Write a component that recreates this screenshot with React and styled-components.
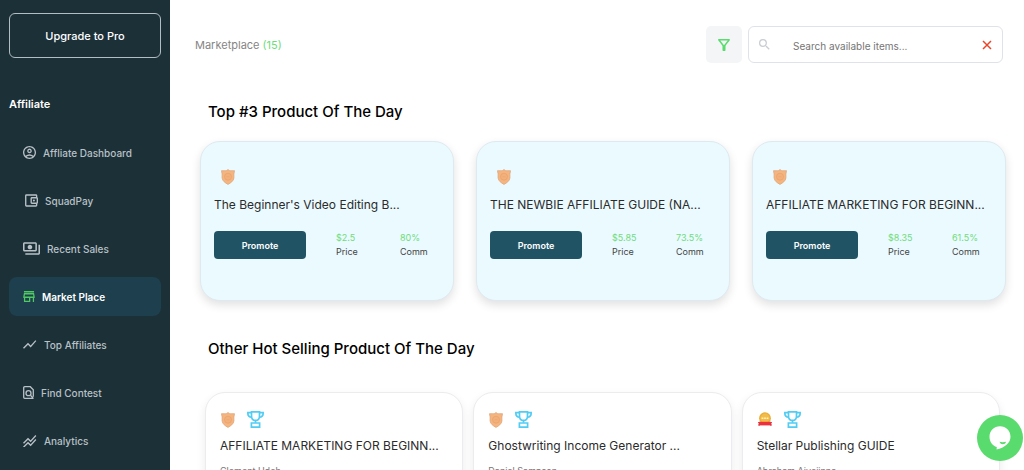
import React, { useState } from "react";
import styled, { createGlobalStyle } from "styled-components";

const topProducts = [
  { id: 1, title: "The Beginner's Video Editing B...", price: "$2.5", comm: "80%" },
  { id: 2, title: "THE NEWBIE AFFILIATE GUIDE (NA...", price: "$5.85", comm: "73.5%" },
  { id: 3, title: "AFFILIATE MARKETING FOR BEGINN...", price: "$8.35", comm: "61.5%" }
];

const otherProducts = [
  { id: 4, title: "AFFILIATE MARKETING FOR BEGINN...", author: "Clement Udeh", badge: "shield" },
  { id: 5, title: "Ghostwriting Income Generator ...", author: "Daniel Sampson", badge: "shield" },
  { id: 6, title: "Stellar Publishing GUIDE", author: "Abraham Aiyejinna", badge: "medal" }
];

const AccountIcon = () => (
  <svg width="13" height="13" viewBox="2 2 20 20" fill="currentColor" aria-hidden="true">
    <path d="M12 2C6.48 2 2 6.48 2 12s4.48 10 10 10 10-4.48 10-10S17.52 2 12 2zM7.35 18.5C8.66 17.56 10.26 17 12 17s3.34.56 4.65 1.5c-1.31.94-2.91 1.5-4.65 1.5s-3.34-.56-4.65-1.5zm10.79-1.38a9.947 9.947 0 0 0-12.28 0A7.957 7.957 0 0 1 4 12c0-4.42 3.58-8 8-8s8 3.58 8 8c0 1.95-.7 3.73-1.86 5.12z" />
    <path d="M12 6c-1.93 0-3.5 1.57-3.5 3.5S10.07 13 12 13s3.5-1.57 3.5-3.5S13.93 6 12 6zm0 5c-.83 0-1.5-.67-1.5-1.5S11.17 8 12 8s1.5.67 1.5 1.5S12.83 11 12 11z" />
  </svg>
);

const WalletIcon = () => (
  <svg width="15" height="13" viewBox="0 2.5 22 19" fill="currentColor" aria-hidden="true">
    <path d="M21 7.28V5c0-1.1-.9-2-2-2H5a2 2 0 0 0-2 2v14a2 2 0 0 0 2 2h14c1.1 0 2-.9 2-2v-2.28A2 2 0 0 0 22 15V9a2 2 0 0 0-1-1.72zM20 9v6h-7V9h7zM5 19V5h14v2h-6c-1.1 0-2 .9-2 2v6c0 1.1.9 2 2 2h6v2H5z" />
    <circle cx="16" cy="12" r="1.5" />
  </svg>
);

const SalesIcon = () => (
  <svg width="17" height="13" viewBox="1 4 22 16" fill="currentColor" aria-hidden="true">
    <path d="M19 14V6c0-1.1-.9-2-2-2H3c-1.1 0-2 .9-2 2v8c0 1.1.9 2 2 2h14c1.1 0 2-.9 2-2zm-2 0H3V6h14v8zm-7-7c-1.66 0-3 1.34-3 3s1.34 3 3 3 3-1.34 3-3-1.34-3-3-3zm13 0v11c0 1.1-.9 2-2 2H4v-2h17V7h2z" />
  </svg>
);

const StoreIcon = () => (
  <svg width="12" height="11" viewBox="2.5 4 19 16" preserveAspectRatio="none" fill="currentColor" aria-hidden="true">
    <path d="M18.36 9l.6 3H5.04l.6-3h12.72M20 4H4v2h16V4zm0 3H4l-1 5v2h1v6h10v-6h4v6h2v-6h1v-2l-1-5zM6 18v-4h6v4H6z" />
  </svg>
);

const TrendIcon = () => (
  <svg width="14" height="9" viewBox="2 5.5 21 13" fill="currentColor" aria-hidden="true">
    <path d="m3.5 18.49 6-6.01 4 4L22 6.92l-1.41-1.41-7.09 7.97-4-4L2 16.99z" />
  </svg>
);

const FindIcon = () => (
  <svg width="11" height="13" viewBox="0 0 11 13" fill="none" stroke="currentColor" strokeWidth="1.3" aria-hidden="true">
    <path d="M10.3 10.8V3.7L7.3.7H1.7a1 1 0 0 0-1 1v9.6a1 1 0 0 0 1 1h7.6c.3 0 .5-.1.7-.2L7.5 9.3" />
    <circle cx="5.5" cy="7.2" r="2.5" />
  </svg>
);

const AnalyticsIcon = () => (
  <svg width="14" height="12" viewBox="2 2.5 21 18" fill="currentColor" aria-hidden="true">
    <path d="m2 19.99 7.5-7.51 4 4 7.09-7.97L22 9.92l-8.5 9.56-4-4-6 6.01L2 19.99zm1.5-4.5 6-6.01 4 4L22 3.92l-1.41-1.41-7.09 7.97-4-4L2 13.99l1.5 1.5z" />
  </svg>
);

const FilterIcon = () => (
  <svg width="12" height="12" viewBox="4 4 16 16" fill="currentColor" aria-hidden="true">
    <path d="M7 6h10l-5.01 6.3L7 6zm-2.75-.39C6.27 8.2 10 13 10 13v6c0 .55.45 1 1 1h2c.55 0 1-.45 1-1v-6s3.72-4.8 5.74-7.39A.998.998 0 0 0 18.95 4H5.04c-.83 0-1.3.95-.79 1.61z" />
  </svg>
);

const SearchIcon = () => (
  <svg width="11" height="11" viewBox="3 3 18 18" fill="currentColor" aria-hidden="true">
    <path d="M15.5 14h-.79l-.28-.27A6.471 6.471 0 0 0 16 9.5 6.5 6.5 0 1 0 9.5 16c1.61 0 3.09-.59 4.23-1.57l.27.28v.79l5 4.99L20.49 19l-4.99-5zm-6 0C7.01 14 5 11.99 5 9.5S7.01 5 9.5 5 14 7.01 14 9.5 11.99 14 9.5 14z" />
  </svg>
);

const CloseIcon = () => (
  <svg width="10" height="10" viewBox="0 0 10 10" fill="none" stroke="currentColor" strokeWidth="1.5" aria-hidden="true">
    <path d="M1 1l8 8M9 1L1 9" />
  </svg>
);

const ShieldBadge = () => (
  <svg width="14" height="16" viewBox="0 0 14 16" aria-hidden="true">
    <path d="M7 .6 8.8 1.8 13.5 1.7 13.1 4C12.6 5 13.1 7 12.9 9c-.3 3-3.2 4.9-5.9 6.4C4.3 13.9 1.4 12 1.1 9 .9 7 1.4 5 .9 4L.5 1.7l4.7.1z" fill="#f5b580" stroke="#e0a678" strokeWidth=".8" />
    <circle cx="7" cy="7.7" r="3.5" fill="#f4b07a" stroke="#e6a06c" strokeWidth=".7" />
    <path d="M5.6 7.7h2.8" stroke="#eaa674" strokeWidth=".8" />
  </svg>
);

const MedalBadge = () => (
  <svg width="14" height="15" viewBox="0 0 14 15" aria-hidden="true">
    <circle cx="7" cy="6.2" r="5.9" fill="#e9ad38" />
    <circle cx="7" cy="6.2" r="4.6" fill="#f2bc48" />
    <path d="M3.6 6.3h6.8" stroke="#fff0c5" strokeWidth="1.6" strokeDasharray="1.8 .7" />
    <path d="M0 10h2v3.5H0l.8-1.7zM14 10h-2v3.5h2l-.8-1.7z" fill="#c9212c" />
    <path d="M1 9.8h12v3.6H1z" fill="#ee303d" />
  </svg>
);

const TrophyIcon = () => (
  <svg width="17" height="17" viewBox="0 0 17 17" fill="none" stroke="#51ccf3" strokeWidth="1.7" aria-hidden="true">
    <path d="M4.5.9h8v4.3c0 2.6-1.6 4.2-4 4.2s-4-1.6-4-4.2z" />
    <path d="M4.5 1.6H.9v1.1c0 2 1.4 3.3 3.8 3.5M12.5 1.6h3.6v1.1c0 2-1.4 3.3-3.8 3.5M8.5 9.4v2.3" />
    <path d="M4.4 12h8.2v4.1H4.4z" />
  </svg>
);

const ChatIcon = () => (
  <svg width="22" height="24" viewBox="0 0 22 24" aria-hidden="true">
    <path d="M11 .3C17 .3 21.5 4.9 21.5 10.7c0 6.4-5.8 10.8-14 12.9l.3-2.6C3.3 19.7.5 15.7.5 10.7.5 4.9 5 .3 11 .3z" fill="#fff" />
    <path d="M10.5 15.8c1.9.6 4.5.6 6.7 0-.7 1.7-1.9 2.5-3.4 2.5s-2.7-.8-3.3-2.5z" fill="#59db6d" />
  </svg>
);

const menu = [
  { name: "Affliate Dashboard", icon: <AccountIcon /> },
  { name: "SquadPay", icon: <WalletIcon /> },
  { name: "Recent Sales", icon: <SalesIcon /> },
  { name: "Market Place", icon: <StoreIcon /> },
  { name: "Top Affiliates", icon: <TrendIcon /> },
  { name: "Find Contest", icon: <FindIcon /> },
  { name: "Analytics", icon: <AnalyticsIcon /> }
];

const App = () => {
  const [active, setActive] = useState("Market Place");
  const [search, setSearch] = useState("");

  return (
    <Layout>
      <GlobalStyle />
      <Sidebar>
        <UpgradeButton type="button">Upgrade to Pro</UpgradeButton>
        <MenuTitle>Affiliate</MenuTitle>
        <Menu>
          {menu.map((item) => (
            <MenuLink key={item.name} href="#" $active={active === item.name} onClick={() => setActive(item.name)}>
              {item.icon}
              {item.name}
            </MenuLink>
          ))}
        </Menu>
      </Sidebar>

      <Main>
        <Header>
          <Crumb>
            Marketplace <span>(15)</span>
          </Crumb>
          <Tools>
            <FilterButton type="button" aria-label="Filter">
              <FilterIcon />
            </FilterButton>
            <SearchBox>
              <SearchIcon />
              <input
                type="text"
                aria-label="Search available items"
                placeholder="Search available items..."
                value={search}
                onChange={(e) => setSearch(e.target.value)}
              />
              <button type="button" aria-label="Clear search" onClick={() => setSearch("")}>
                <CloseIcon />
              </button>
            </SearchBox>
          </Tools>
        </Header>

        <SectionTitle>Top #3 Product Of The Day</SectionTitle>
        <TopGrid>
          {topProducts.map((item) => (
            <TopCard key={item.id}>
              <TopBadge>
                <ShieldBadge />
              </TopBadge>
              <ProductTitle>{item.title}</ProductTitle>
              <CardFooter>
                <PromoteButton type="button">Promote</PromoteButton>
                <Stat>
                  <span>{item.price}</span>
                  <p>Price</p>
                </Stat>
                <Stat>
                  <span>{item.comm}</span>
                  <p>Comm</p>
                </Stat>
              </CardFooter>
            </TopCard>
          ))}
        </TopGrid>

        <SectionTitle>Other Hot Selling Product Of The Day</SectionTitle>
        <OtherGrid>
          {otherProducts.map((item) => (
            <OtherCard key={item.id}>
              <Badges>
                {item.badge === "shield" ? <ShieldBadge /> : <MedalBadge />}
                <TrophyIcon />
              </Badges>
              <ProductTitle>{item.title}</ProductTitle>
              <Author>{item.author}</Author>
            </OtherCard>
          ))}
        </OtherGrid>
      </Main>

      <ChatButton type="button" aria-label="Chat">
        <ChatIcon />
      </ChatButton>
    </Layout>
  );
};

export default App;

const GlobalStyle = createGlobalStyle`
  * {
    box-sizing: border-box;
    margin: 0;
    padding: 0;
  }

  body, button, input {
    font-family: "Inter", sans-serif;
  }

  button {
    border: none;
    cursor: pointer;
  }

  svg {
    display: block;
    flex-shrink: 0;
  }
`;

const Layout = styled.div`
  display: flex;
  height: 100vh;
  overflow: hidden;
  background: #ffffff;
`;

const Sidebar = styled.aside`
  flex: 0 0 170px;
  padding: 13px 9px 0;
  background: #1c3038;
  overflow: hidden;
`;

const UpgradeButton = styled.button`
  width: 100%;
  height: 45px;
  border: 1px solid #b4bdc1;
  border-radius: 6px;
  background: transparent;
  color: #ffffff;
  font-weight: 500;
  font-size: 11px;
`;

const MenuTitle = styled.h2`
  margin-top: 38px;
  font-weight: 600;
  font-size: 11px;
  line-height: 16px;
  color: #ffffff;
`;

const Menu = styled.nav`
  display: flex;
  flex-direction: column;
  gap: 9px;
  margin-top: 21px;
`;

const MenuLink = styled.a`
  display: flex;
  align-items: center;
  gap: 7px;
  height: 39px;
  flex-shrink: 0;
  padding: 0 14px;
  border-radius: 8px;
  background: ${({ $active }) => ($active ? "#1e3f4d" : "transparent")};
  color: ${({ $active }) => ($active ? "#ffffff" : "#b9c1c6")};
  font-weight: ${({ $active }) => ($active ? 600 : 500)};
  font-size: 10px;
  text-decoration: none;
  white-space: nowrap;

  svg {
    color: ${({ $active }) => ($active ? "#4fc962" : "#b9c1c6")};
  }
`;

const Main = styled.main`
  flex: 1;
  min-width: 0;
  padding-top: 26px;
  overflow-y: auto;
  scrollbar-width: none;
`;

const Header = styled.header`
  display: flex;
  align-items: center;
  justify-content: space-between;
  padding: 0 21px 0 25px;
  margin-bottom: 39px;
`;

const Crumb = styled.p`
  font-size: 11px;
  line-height: 16px;
  color: #858585;

  span {
    color: #6fdc7c;
  }
`;

const Tools = styled.div`
  display: flex;
  gap: 6px;
`;

const FilterButton = styled.button`
  display: flex;
  align-items: center;
  justify-content: center;
  width: 36px;
  height: 37px;
  border-radius: 5px;
  background: #f3f5f7;
  color: #59db6d;
`;

const SearchBox = styled.div`
  display: flex;
  align-items: center;
  width: 255px;
  height: 37px;
  padding: 0 10px;
  border: 1px solid #dfe2e8;
  border-radius: 6px;
  color: #c9ccd2;

  input {
    flex: 1;
    min-width: 0;
    padding: 2px 0 0 23px;
    border: none;
    outline: none;
    background: transparent;
    font-size: 10px;
    color: #333333;
  }

  input::placeholder {
    color: #757575;
  }

  button {
    background: transparent;
    color: #e8462a;
  }
`;

const SectionTitle = styled.h3`
  padding-left: 38px;
  font-weight: 500;
  font-size: 15px;
  line-height: 20px;
  color: #000000;
`;

const TopGrid = styled.section`
  display: grid;
  grid-template-columns: repeat(3, minmax(0, 1fr));
  gap: 22px;
  padding: 0 18px 0 30px;
  margin: 19px 0 38px;
`;

const ProductTitle = styled.h4`
  font-weight: 400;
  font-size: 12px;
  line-height: 20px;
  color: #2b2b2b;
  white-space: nowrap;
`;

const TopCard = styled.article`
  padding: 27px 13px 41px;
  border: 1px solid #dfeaf0;
  border-radius: 20px;
  background: #ebfaff;
  box-shadow: 0 4px 10px rgba(0, 0, 0, 0.12);
`;

const TopBadge = styled.div`
  padding-left: 7px;
  margin-bottom: 10px;
`;

const CardFooter = styled.div`
  display: flex;
  align-items: center;
  gap: 30px;
  margin-top: 16px;
`;

const PromoteButton = styled.button`
  width: 92px;
  height: 28px;
  border-radius: 4px;
  background: #205464;
  color: #ffffff;
  font-weight: 600;
  font-size: 9px;
`;

const Stat = styled.div`
  width: 34px;
  font-size: 9px;
  line-height: 14px;
  color: #444444;

  span {
    display: block;
    color: #6fdc7c;
  }
`;

const OtherGrid = styled.section`
  display: grid;
  grid-template-columns: repeat(3, minmax(0, 1fr));
  gap: 10px;
  padding: 0 24px 20px 35px;
  margin-top: 33px;
`;

const OtherCard = styled.article`
  padding: 18px 14px 60px;
  border: 1px solid #ececef;
  border-radius: 20px;
  background: #ffffff;
  box-shadow: 0 4px 10px rgba(0, 0, 0, 0.08);
`;

const Badges = styled.div`
  display: flex;
  align-items: center;
  gap: 12px;
  padding-left: 1px;
  margin-bottom: 8px;
`;

const Author = styled.p`
  margin-top: 8px;
  font-size: 9px;
  line-height: 14px;
  color: #777777;
`;

const ChatButton = styled.button`
  position: fixed;
  right: 1px;
  bottom: 9px;
  display: flex;
  align-items: center;
  justify-content: center;
  width: 46px;
  height: 46px;
  border-radius: 50%;
  background: #59db6d;
`;
